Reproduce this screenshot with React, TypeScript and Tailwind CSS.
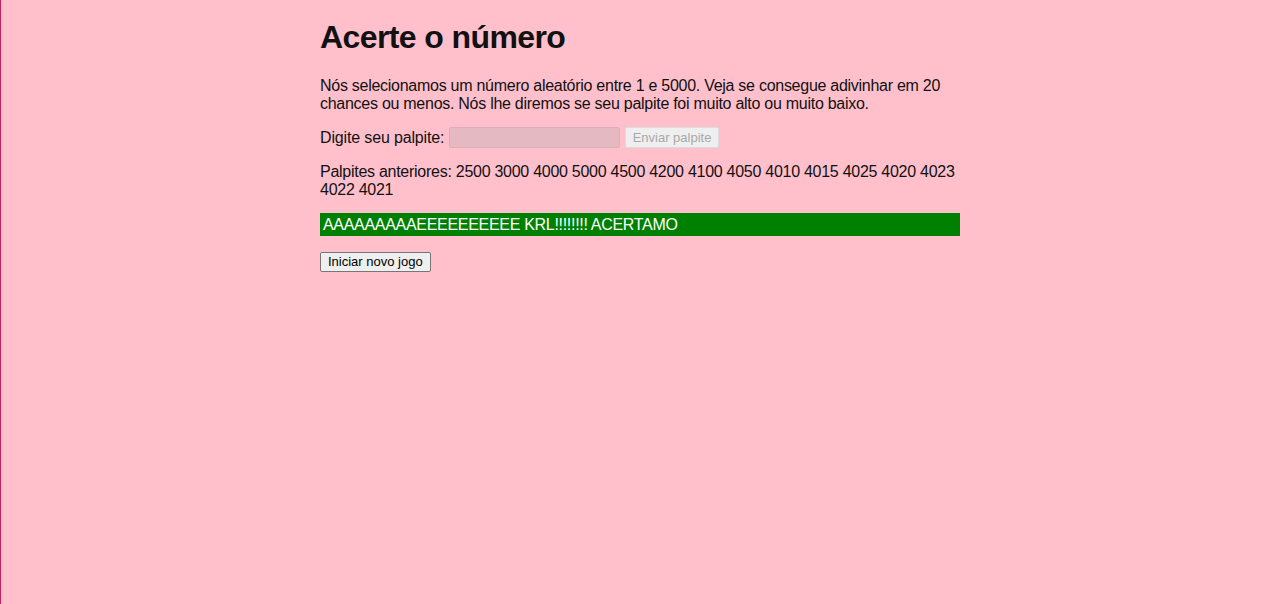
export default function App() {
  const palpites = [2500, 3000, 4000, 5000, 4500, 4200, 4100, 4050, 4010, 4015, 4025, 4020, 4023, 4022, 4021];

  return (
    <div className="min-h-screen h-[604px] bg-[#ffc0cb] border-l border-[#c8205f] font-['Liberation_Sans',Arial,sans-serif] text-[#111]">
      <div className="w-[640px] pt-[19px] ml-[319px]">
        <h1 className="text-[32px] font-bold leading-[37px] mb-[21px] tracking-[-0.6px]">Acerte o número</h1>

        <p className="text-[16px] leading-[18px] tracking-[-0.27px]">
          Nós selecionamos um número aleatório entre 1 e 5000. Veja se consegue adivinhar em 20 chances ou menos. Nós lhe diremos se seu palpite foi muito alto ou muito baixo.
        </p>

        <div className="mt-[14px] flex items-center h-[21px] text-[16px] tracking-[-0.15px]">
          <label htmlFor="guessField">Digite seu palpite:&nbsp;</label>
          <input
            id="guessField"
            type="number"
            disabled
            className="w-[171px] h-[21px] bg-[#e5b9c1] border border-[#d9b0b8] rounded-[2px]"
          />
          <button
            disabled
            className="ml-[5px] h-[21px] px-[7px] text-[13px] tracking-normal text-[#a9a9a9] bg-[#efefef] border border-[#dcdcdc] rounded-[2px]"
          >
            Enviar palpite
          </button>
        </div>

        <p className="mt-[15px] text-[16px] leading-[18px] tracking-[-0.27px]">
          Palpites anteriores: {palpites.join(" ")}
        </p>

        <p className="mt-[14px] bg-[#008000] text-white text-[16px] leading-[18px] px-[3px] py-[2.5px] tracking-[-0.3px]">
          AAAAAAAAAEEEEEEEEEE KRL!!!!!!!! ACERTAMO
        </p>

        <button className="mt-[16px] h-[20px] px-[7px] text-[13px] leading-[16px] text-black bg-[#efefef] border border-[#767676] rounded-[2px]">
          Iniciar novo jogo
        </button>
      </div>
    </div>
  );
}
